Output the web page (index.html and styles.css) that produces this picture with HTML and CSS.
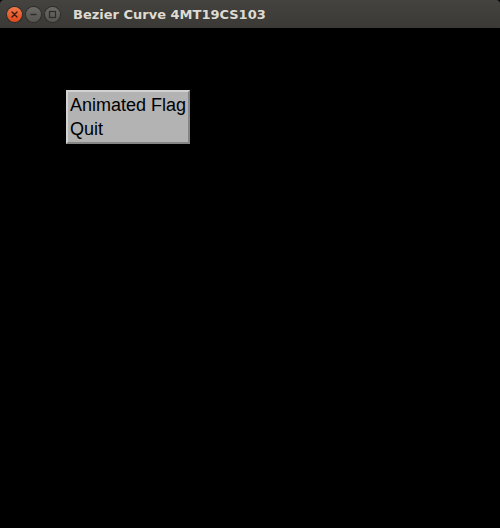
FILE: index.html
```html
<!DOCTYPE html>
<html>
<head>
<meta charset="utf-8">
<link rel="stylesheet" href="styles.css">
</head>
<body>
<div class="window">
  <div class="titlebar">
    <div class="controls">
      <span class="btn close">
        <svg width="15" height="15" viewBox="0 0 15 15"><path d="M5 5 L10 10 M10 5 L5 10" stroke="#3a1a10" stroke-width="1.4" stroke-linecap="round"/></svg>
      </span>
      <span class="btn">
        <svg width="15" height="15" viewBox="0 0 15 15"><path d="M4.5 7.5 H10.5" stroke="#2c2b28" stroke-width="1.4"/></svg>
      </span>
      <span class="btn">
        <svg width="15" height="15" viewBox="0 0 15 15"><rect x="4.5" y="4.5" width="6" height="6" fill="none" stroke="#2c2b28" stroke-width="1.2"/></svg>
      </span>
    </div>
    <div class="title">Bezier Curve 4MT19CS103</div>
  </div>
  <div class="canvas">
    <div class="menu">
      <div class="item">Animated Flag</div>
      <div class="item">Quit</div>
    </div>
  </div>
</div>
</body>
</html>
```
FILE: styles.css
```css
html, body {
  margin: 0;
  padding: 0;
  background: #000;
}
.window {
  width: 500px;
  height: 528px;
  display: flex;
  flex-direction: column;
}
.titlebar {
  height: 28px;
  flex: none;
  display: flex;
  align-items: center;
  background: linear-gradient(#44433f, #3a3935);
  border-radius: 4px 4px 0 0;
}
.controls {
  display: flex;
  gap: 4px;
  padding-left: 7px;
}
.btn {
  width: 15px;
  height: 15px;
  border-radius: 50%;
  background: linear-gradient(#6b6a66, #55544f);
  box-shadow: 0 0 0 1px #2e2d2a;
  display: flex;
}
.btn.close {
  background: linear-gradient(#f2784a, #e0491b);
}
.title {
  margin-left: 13px;
  font-family: "DejaVu Sans", sans-serif;
  font-weight: bold;
  font-size: 13px;
  color: #dfdbd2;
}
.canvas {
  flex: 1;
  background: #000;
  padding: 62px 0 0 66px;
}
.menu {
  width: 118px;
  background: #b3b3b3;
  border: 2px solid;
  border-color: #d2d2d2 #858585 #858585 #d2d2d2;
  padding: 1px 0 1px 2px;
}
.item {
  font-family: "Liberation Sans", Arial, sans-serif;
  font-size: 18px;
  line-height: 24px;
  color: #000;
  white-space: nowrap;
}
```
